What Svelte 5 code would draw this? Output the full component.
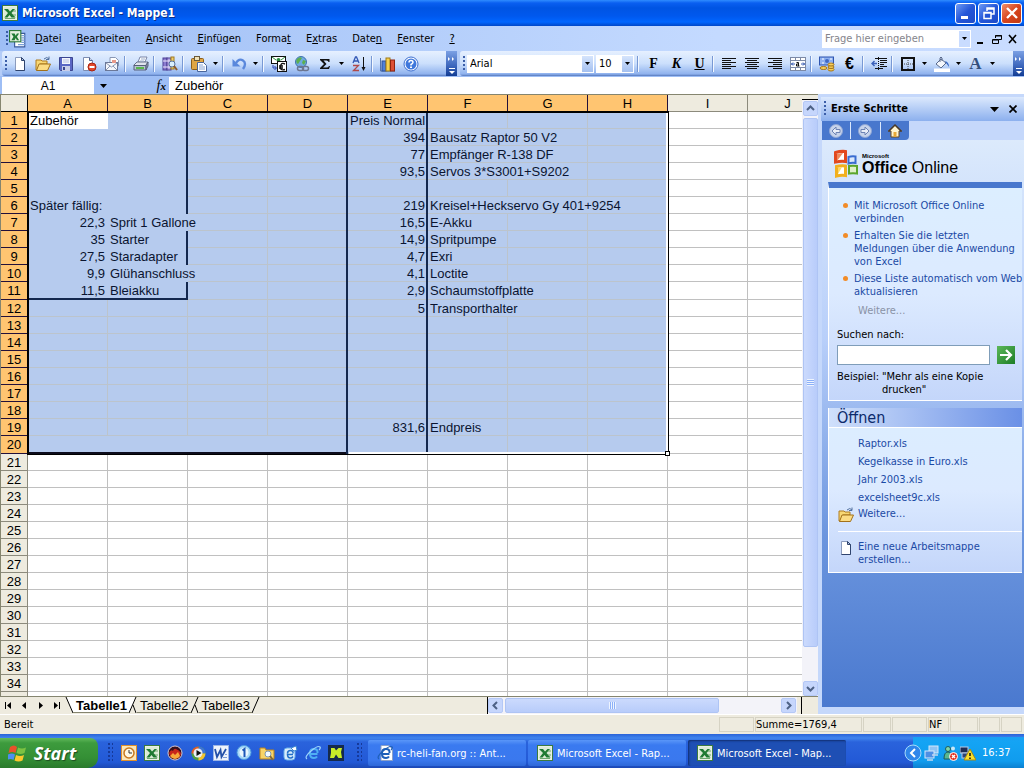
<script>
  const columns = ["A", "B", "C", "D", "E", "F", "G", "H", "I", "J"];
  const rowNumbers = Array.from({ length: 35 }, (_, i) => i + 1);

  // spill: how many cell edges the text runs across
  const cells = {
    A1: { text: "Zubehör" },
    A6: { text: "Später fällig:", spill: 1 },
    A7: { text: "22,3", num: true },
    B7: { text: "Sprit 1 Gallone", spill: 1 },
    A8: { text: "35", num: true },
    B8: { text: "Starter" },
    A9: { text: "27,5", num: true },
    B9: { text: "Staradapter" },
    A10: { text: "9,9", num: true },
    B10: { text: "Glühanschluss", spill: 1 },
    A11: { text: "11,5", num: true },
    B11: { text: "Bleiakku" },
    E1: { text: "Preis Normal" },
    E2: { text: "394", num: true },
    F2: { text: "Bausatz Raptor 50 V2", spill: 1 },
    E3: { text: "77", num: true },
    F3: { text: "Empfänger R-138 DF", spill: 1 },
    E4: { text: "93,5", num: true },
    F4: { text: "Servos 3*S3001+S9202", spill: 1 },
    E6: { text: "219", num: true },
    F6: { text: "Kreisel+Heckservo Gy 401+9254", spill: 2 },
    E7: { text: "16,5", num: true },
    F7: { text: "E-Akku" },
    E8: { text: "14,9", num: true },
    F8: { text: "Spritpumpe" },
    E9: { text: "4,7", num: true },
    F9: { text: "Exri" },
    E10: { text: "4,1", num: true },
    F10: { text: "Loctite" },
    E11: { text: "2,9", num: true },
    F11: { text: "Schaumstoffplatte", spill: 1 },
    E12: { text: "5", num: true },
    F12: { text: "Transporthalter", spill: 1 },
    E19: { text: "831,6", num: true },
    F19: { text: "Endpreis" },
  };

  const isSpilled = (c, r) => {
    for (let back = 0; back < 2; back++) {
      const cell = cells[columns[c - back] + r];
      if (cell?.spill > back) return true;
    }
    return false;
  };

  const cellClass = (c, r) => {
    const name = [];
    const selected = c < 8 && r <= 20;
    if (selected) name.push("sel");
    if (c === 0 && r === 1) name.push("active");
    if (c < 2 && r <= 11) name.push("plain");
    if (isSpilled(c, r)) name.push("open");
    else if (c === 1 && r <= 11) name.push("thick-r");
    if (c < 2 && r === 11) name.push("thick-b");
    if ((c === 3 || c === 4) && r <= 20) name.push("thick-r");
    if (c < 4 && r === 20) name.push("total");
    if (cells[columns[c] + r]?.num) name.push("num");
    return name.join(" ");
  };

  const menus = [
    ["", "D", "atei"],
    ["", "B", "earbeiten"],
    ["", "A", "nsicht"],
    ["", "E", "infügen"],
    ["Forma", "t", ""],
    ["E", "x", "tras"],
    ["Date", "n", ""],
    ["", "F", "enster"],
    ["", "?", ""],
  ];

  const standardTools = [
    ["new", "Neu"],
    ["open", "Öffnen"],
    ["save", "Speichern"],
    ["permission", "Berechtigung"],
    ["mail", "E-Mail"],
    ["|"],
    ["print", "Drucken"],
    ["|"],
    ["research", "Recherchieren"],
    ["|"],
    ["paste", "Einfügen", true],
    ["|"],
    ["undo", "Rückgängig", true],
    ["|"],
    ["convert", "Euroumrechnung"],
    ["link", "Hyperlink"],
    ["sum", "AutoSumme", true],
    ["sort", "Aufsteigend sortieren"],
    ["|"],
    ["chart", "Diagramm-Assistent"],
    ["help", "Hilfe"],
  ];

  const formatTools = [
    ["|"],
    ["bold", "Fett"],
    ["italic", "Kursiv"],
    ["underline", "Unterstrichen"],
    ["|"],
    ["left", "Linksbündig"],
    ["center", "Zentriert"],
    ["right", "Rechtsbündig"],
    ["merge", "Verbinden und zentrieren"],
    ["|"],
    ["currency", "Währung"],
    ["euro", "Euro"],
    ["|"],
    ["outdent", "Einzug verkleinern"],
    ["|"],
    ["border", "Rahmen", true],
    ["fill", "Füllfarbe", true],
    ["color", "Schriftfarbe", true],
  ];

  const news = [
    "Mit Microsoft Office Online verbinden",
    "Erhalten Sie die letzten Meldungen über die Anwendung von Excel",
    "Diese Liste automatisch vom Web aktualisieren",
  ];
  const recent = ["Raptor.xls", "Kegelkasse in Euro.xls", "Jahr 2003.xls", "excelsheet9c.xls"];

  const quickLaunch = ["outlook", "excel", "firebird", "media", "word", "one", "folder", "express", "ie", "icq"];
  const tasks = [
    { icon: "iedoc", label: "rc-heli-fan.org :: Ant..." },
    { icon: "excel", label: "Microsoft Excel - Rap..." },
    { icon: "excel", label: "Microsoft Excel - Map...", active: true },
  ];

  let fontName = $state("Arial");
  let fontSize = $state("10");
  let formula = $state("Zubehör");
  let nameBox = $state("A1");
  let sheet = $state("Tabelle1");
</script>

{#snippet icon(name)}
  <svg class="icon" viewBox="0 0 16 16" width="16" height="16" aria-hidden="true">
    {#if name === "excel"}
      <rect x="0.5" y="0.5" width="15" height="15" fill="#e9f1e4" stroke="#3c7a3e" />
      <rect x="2" y="2" width="12" height="12" fill="#dcebd6" />
      <path d="M2 4h4l2 2.500L10.500 4H13L9.500 8l4 4.500h-4L7.500 10 5.500 12.500H2.500L6 8z" fill="#1f7a33" />
      <path d="M11 6h3M11 10h3M3 13.500h10" stroke="#6aa86e" />
    {:else if name === "book"}
      <path d="M5 3h9v12H5z" fill="#fff" stroke="#3a5a9c" />
      <path d="M11 5h3M11 7h3M11 9h3M11 11h3M8 13h6" stroke="#7aa0d8" />
      <rect x="0.5" y="0.5" width="10" height="10" fill="#e4f0df" stroke="#2f7a3a" />
      <path d="M2 3h3l1 2 1-2h2L7 6l2 3H7L6 7 5 9H2l2-3z" fill="#1f7a33" />
    {:else if name === "new"}
      <path d="M3.5 1.5h6l3 3v10h-9z" fill="#fff" stroke="#8b9bbd" />
      <path d="M12.5 4.500v10h-9" fill="none" stroke="#2f446e" />
      <path d="M9.500 1.500v3h3z" fill="#b8c8e8" stroke="#2f446e" />
    {:else if name === "open"}
      <path d="M1 4h5l1 1h5v3H5l-3 6H1z" fill="#f7d774" stroke="#b07c1e" />
      <path d="M4 8h11.500l-3 6.500H1.500z" fill="#fbdc84" stroke="#a2711a" />
      <path d="M9 3q3-3 5 0M14 0.500V3.500h-3" fill="none" stroke="#52719f" />
    {:else if name === "save"}
      <path d="M1.500 1.500h13v13h-12l-1-1z" fill="#5a66c4" stroke="#3c4691" />
      <rect x="4" y="2" width="8" height="6" fill="#f3f5fc" />
      <path d="M5 4h6M5 6h6" stroke="#b8bfe2" />
      <rect x="4" y="10" width="8" height="5" fill="#c9cee8" />
      <rect x="5" y="11" width="2" height="3" fill="#39448e" />
    {:else if name === "permission"}
      <path d="M2.500 1.500h6l3 3v10h-9z" fill="#fff" stroke="#7c8db2" />
      <path d="M8.500 1.500v3h3" fill="#cdd9ef" stroke="#51658f" />
      <circle cx="11" cy="11" r="4" fill="#e2492c" stroke="#a82310" />
      <rect x="8.500" y="10" width="5" height="2" fill="#fff" />
    {:else if name === "mail"}
      <path d="M6 5V1.500h5.500l3 3V10H6z" fill="#fff" stroke="#8a98b4" />
      <rect x="1.500" y="6.500" width="12" height="8" fill="#f4f6fb" stroke="#6b7898" />
      <path d="M2 7l5.500 4L13 7M2 14l4-4M13 14l-4-4" fill="none" stroke="#8a98b4" />
      <rect x="8" y="4" width="4" height="3" fill="#e89888" />
    {:else if name === "print"}
      <path d="M5 6l2-5h7l-2 5z" fill="#fff" stroke="#7a86a8" />
      <path d="M1 9l3-3h11l-2 4H1z" fill="#dfe4ec" stroke="#68728a" />
      <path d="M1 9.500h12v4.500H1z" fill="#b9c2d2" stroke="#56607a" />
      <path d="M13 9l2-3v4l-2 4z" fill="#8e99ae" stroke="#56607a" />
      <rect x="3" y="11" width="8" height="2" fill="#58b84a" />
      <path d="M8 3h4M7 5h4" stroke="#9fb0cc" />
    {:else if name === "research"}
      <rect x="1" y="2" width="4" height="12" fill="#8c7cd0" stroke="#4c3f94" />
      <rect x="5" y="2" width="4" height="12" fill="#b4a4e4" stroke="#4c3f94" />
      <path d="M1 5h8M1 11h8" stroke="#efeafd" />
      <rect x="9" y="1" width="3" height="12" fill="#f0cf6a" stroke="#a07a22" />
      <circle cx="10" cy="8" r="3" fill="#d9effc" stroke="#55719c" />
      <path d="M12 10l3 4" stroke="#8a5a2c" stroke-width="2" />
    {:else if name === "paste"}
      <rect x="0.500" y="2.500" width="12" height="11" rx="1" fill="#e0a645" stroke="#8c5f1a" />
      <rect x="3.500" y="0.500" width="5" height="4" fill="#f0e2b8" stroke="#6b5a38" />
      <path d="M6.500 6.500h6l3 3v6h-9z" fill="#fff" stroke="#4a669c" />
      <path d="M8 9h4M8 11h6M8 13h6" stroke="#88a4d4" />
    {:else if name === "undo"}
      <path d="M5 7q3-5 7-2.500t0 8.500" fill="none" stroke="#5a88dc" stroke-width="2.400" />
      <path d="M1.500 3v7.500h8z" fill="#5a88dc" />
    {:else if name === "convert"}
      <rect x="0.500" y="0.500" width="14" height="7" fill="#fff" stroke="#111" />
      <path d="M1 1l4 3M14 1l-4 3" stroke="#2a8a3c" />
      <circle cx="7.500" cy="4" r="2" fill="#2a8a3c" />
      <rect x="6.500" y="5.500" width="9" height="10" fill="#fff" stroke="#111" />
      <path d="M14 8q-4-2-4.500 2.500T14 13.500M8 10h4M8 12h4" fill="none" stroke="#111" stroke-width="1.400" />
      <path d="M2 9v3h3M3.500 10l2 2-2 2" fill="none" stroke="#2440b0" />
    {:else if name === "link"}
      <circle cx="7" cy="6" r="5.500" fill="#6fa9e0" stroke="#3f73ac" />
      <path d="M3 3q3-3 5-1l-2 3-2 3q-3-2-1-5M9 4l3 1-2 4-2-2z" fill="#5cb04e" />
      <rect x="3.500" y="10.500" width="6" height="4" rx="2" fill="none" stroke="#6c7690" stroke-width="1.500" />
      <rect x="8.500" y="10.500" width="6" height="4" rx="2" fill="none" stroke="#6c7690" stroke-width="1.500" />
    {:else if name === "sum"}
      <path d="M3 3h9.500v3h-1q0-1.500-2-1.500H6.500L9.500 8l-3.500 3.500h3.500q2 0 2.500-1.500h1l-1 3H3v-1L7 8 3 4z" fill="#111" />
    {:else if name === "sort"}
      <path d="M2 7l2.500-6h1L8 7M3 5h4" fill="none" stroke="#3358b4" stroke-width="1.300" />
      <path d="M2 9.500h5.500L2.500 14.500H8" fill="none" stroke="#b04a4a" stroke-width="1.300" />
      <path d="M12.500 1v12" stroke="#111" />
      <path d="M10.500 11h4l-2 4z" fill="#111" />
    {:else if name === "chart"}
      <path d="M0.500 2v13H15" fill="none" stroke="#5572a8" />
      <rect x="2" y="5" width="4" height="10" fill="#4f80d8" stroke="#2c4f98" />
      <rect x="6" y="2" width="4" height="13" fill="#f7d14e" stroke="#a07a14" />
      <rect x="10.500" y="4" width="4" height="11" fill="#dd5136" stroke="#90250f" />
    {:else if name === "help"}
      <circle cx="8" cy="8" r="7" fill="#fff" stroke="#3c6fd0" />
      <circle cx="8" cy="8" r="5.500" fill="#3f78dc" />
      <path d="M6 6.500q0-2 2-2t2 1.800q0 1-2 2.200v1" fill="none" stroke="#fff" stroke-width="1.500" />
      <rect x="7" y="10.500" width="2" height="1.500" fill="#fff" />
    {:else if name === "left" || name === "center" || name === "right"}
      <path d="M1 2.500h14M1 6.500h14M1 10.500h14" stroke="#111" />
      {#if name === "left"}
        <path d="M1 4.500h9M1 8.500h9M1 12.500h9" stroke="#111" />
      {:else if name === "center"}
        <path d="M3 4.500h10M3 8.500h10M3 12.500h10" stroke="#111" />
      {:else}
        <path d="M6 4.500h9M6 8.500h9M6 12.500h9" stroke="#111" />
      {/if}
    {:else if name === "merge"}
      <rect x="0.500" y="1.500" width="15" height="13" fill="#fff" stroke="#7d8aa6" />
      <path d="M1 4.500h14M1 11.500h14M5.500 2v2M10.500 2v2M5.500 12v2M10.500 12v2" stroke="#7d8aa6" />
      <path d="M1 8h4M3 6.500L1.500 8 3 9.500M15 8h-4M13 6.500L14.500 8 13 9.500" fill="none" stroke="#2f55b0" />
      <path d="M6.500 6.500h2v3.500M8.500 8h-2v2h3" fill="none" stroke="#111" />
    {:else if name === "currency"}
      <rect x="0.500" y="1" width="14" height="8" fill="#8db0f0" stroke="#2f55b0" />
      <circle cx="8" cy="5" r="2" fill="#3f68c4" />
      <path d="M3 3h2M11 3h2M3 7h2M11 7h2" stroke="#fff" />
      <ellipse cx="4.500" cy="12" rx="3.500" ry="1.500" fill="#f7cf58" stroke="#a5751a" />
      <ellipse cx="12" cy="13.500" rx="3" ry="1.500" fill="#f7cf58" stroke="#a5751a" />
      <ellipse cx="12" cy="11" rx="3" ry="1.500" fill="#f7cf58" stroke="#a5751a" />
      <ellipse cx="12" cy="8.500" rx="3" ry="1.500" fill="#f7cf58" stroke="#a5751a" />
    {:else if name === "outdent"}
      <path d="M4 2.500h12M9 4.500h7M9 6.500h7M9 8.500h4M9 10.500h7M4 12.500h8" stroke="#111" />
      <path d="M1 7.500h5M3.500 5L1 7.500 3.500 10" fill="none" stroke="#3b62bc" stroke-width="1.500" />
      <path d="M7.500 1v14" stroke="#111" stroke-dasharray="1 1" />
    {:else if name === "border"}
      <rect x="2" y="2" width="12" height="12" fill="none" stroke="#111" stroke-width="2" />
      <path d="M8 4v9M4 8h9" stroke="#444" stroke-dasharray="1 1" />
    {:else if name === "fill"}
      <path d="M2 8l5-5 5 4-5 5z" fill="#f5f8fd" stroke="#5a6a8c" />
      <path d="M6 6V2q1-2 2 0v3" fill="none" stroke="#5a6a8c" />
      <path d="M11 5q4 1 4 6-2-3-3-4z" fill="#3568c8" />
      <rect x="0" y="12.500" width="16" height="3.500" fill="#fff" />
    {:else if name === "outlook"}
      <rect x="0.500" y="0.500" width="15" height="15" fill="#fbe6b8" stroke="#e0902c" />
      <circle cx="8" cy="8" r="5" fill="#fff8e2" stroke="#c87820" stroke-width="1.500" />
      <path d="M8 5v3h3" fill="none" stroke="#333" />
    {:else if name === "firebird"}
      <circle cx="8" cy="8" r="7" fill="#37101c" stroke="#d8c8d0" />
      <path d="M2 8q2-4 4-2 1-3 3-2 3 1 5 4 0 5-6 6-5-1-6-6" fill="#c8251a" />
      <path d="M3 11l3-3 2 2 3-3 2 4q-2 3-5 3t-5-3" fill="#f8a83a" />
    {:else if name === "media"}
      <circle cx="8.500" cy="8.500" r="7" fill="#4f9c46" />
      <path d="M8.500 8.500V1.500a7 7 0 0 1 7 7z" fill="#3f74d4" />
      <path d="M8.500 8.500h7a7 7 0 0 1-7 7z" fill="#f1c232" />
      <path d="M8.500 8.500h-7a7 7 0 0 1 7-7z" fill="#e25a2b" />
      <circle cx="8" cy="8" r="4.500" fill="#e9eef6" />
      <path d="M6.500 5l5 3-5 3z" fill="#111" />
    {:else if name === "word"}
      <rect x="0.500" y="0.500" width="15" height="15" fill="#eef3fc" stroke="#9cb4e4" />
      <path d="M2 4l2 8L7.500 5l1 7 4.500-8" fill="none" stroke="#2450a8" stroke-width="1.800" />
      <path d="M10 12.500h4M12 9.500h2" stroke="#7d9cd8" />
    {:else if name === "one"}
      <circle cx="8" cy="7.500" r="7" fill="#a8d8f8" stroke="#4f9ce0" />
      <circle cx="8" cy="7.500" r="4.500" fill="#e8f6ff" />
      <path d="M6.500 5.500L8.500 4v8" fill="none" stroke="#1d57b8" stroke-width="2" />
    {:else if name === "folder"}
      <path d="M1 3h5l1 2h8v9H1z" fill="#f8d468" stroke="#b9821c" />
      <circle cx="9" cy="9" r="3" fill="#f2fbff" stroke="#7f97b0" />
      <path d="M11 11l3 4" stroke="#7f6a40" stroke-width="2" />
    {:else if name === "express"}
      <rect x="2" y="3" width="11" height="12" rx="3" fill="#d8ecfb" stroke="#6ab0ea" />
      <path d="M11 9.500H5.500q0 3.500 3 3.500 1.500 0 2.500-1.500M5.500 8.500q0-3 3-3t2.500 3" fill="none" stroke="#2270c8" stroke-width="1.500" />
      <path d="M9 3l5-2 1 4-3 1z" fill="#fff" stroke="#3a86d0" />
    {:else if name === "ie" || name === "iedoc"}
      {#if name === "iedoc"}
        <path d="M4 0.500h8l3.500 3.500v11.500H4z" fill="#fff" stroke="#8aa0c8" />
      {/if}
      <path d="M12.500 9H5q0 4 4 4 2 0 3-1.500M5 8q0-4 4-4t3.500 4" fill="none" stroke={name === "ie" ? "#4fb0f4" : "#1d5fb8"} stroke-width="2" />
      <path d="M2 14q-3-2 4-8T15 2q1 1-1 3" fill="none" stroke={name === "ie" ? "#9cd4fb" : "#1d5fb8"} stroke-width="1.200" />
    {:else if name === "icq"}
      <rect x="0" y="0" width="16" height="16" fill="#152a4c" />
      <path d="M3 3h3.500l1.500 2.500L10.500 3H14l-1 4 1 6h-3.500L8 9.500 6 13H2l1-5z" fill="#c8ec28" />
    {:else if name === "home"}
      <path d="M8 2l6.500 6H12v6H4V8H1.500z" fill="#fff4d0" stroke="#6a4a20" />
      <path d="M1.500 8.500L8 2l6.500 6.500" fill="none" stroke="#4a3a28" stroke-width="1.500" />
      <rect x="6.500" y="9" width="3" height="5" fill="#e8a838" />
    {:else if name === "back" || name === "forward"}
      <circle cx="8" cy="8" r="6.500" fill="#c7d3ea" stroke="#8ea6d6" />
      <path d={name === "back" ? "M4 8l4-4v2.500h4v3H8V12z" : "M12 8L8 4v2.500H4v3h4V12z"} fill="#e9eef8" stroke="#6d83b4" />
    {:else if name === "net"}
      <rect x="5" y="1" width="9" height="7" fill="#8fc4f4" stroke="#d4e8fb" />
      <rect x="1" y="6" width="9" height="7" fill="#4d8fe4" stroke="#d4e8fb" />
      <path d="M3 15h6M8 10h6" stroke="#c4d8f0" stroke-width="1.500" />
    {:else if name === "msn"}
      <circle cx="6" cy="4" r="2.500" fill="#7fd6a8" stroke="#1f5a5a" />
      <path d="M2 14q0-7 4-7t4 7z" fill="#58b890" stroke="#1f5a5a" />
      <circle cx="11" cy="3.500" r="2" fill="#c8e8f8" />
      <circle cx="11.500" cy="11.500" r="4" fill="#e03424" stroke="#fff" />
      <path d="M10 10l3 3M13 10l-3 3" stroke="#fff" stroke-width="1.400" />
    {:else if name === "warn"}
      <rect x="0" y="2" width="8" height="6" fill="#1c2c54" stroke="#b8cbe8" />
      <rect x="2" y="8" width="8" height="5" fill="#2c4478" stroke="#b8cbe8" />
      <path d="M10 4l6 11H4z" fill="#fbe02c" stroke="#a88a10" />
      <path d="M10 8v3M10 12.500v1.500" stroke="#111" stroke-width="1.500" />
    {/if}
  </svg>
{/snippet}

{#snippet arrow()}
  <svg viewBox="0 0 5 3" width="5" height="3" aria-hidden="true"><path d="M0 0h5L2.500 3z" fill="#000" /></svg>
{/snippet}

{#snippet chevron(dir)}
  <svg viewBox="0 0 9 9" width="9" height="9" aria-hidden="true">
    <path
      d={{ up: "M1 6l3.500-3.500L8 6", down: "M1 3l3.500 3.500L8 3", left: "M6 1L2.500 4.500 6 8", right: "M3 1l3.500 3.500L3 8" }[dir]}
      fill="none"
      stroke="#4d6185"
      stroke-width="2"
    />
  </svg>
{/snippet}

{#snippet tool([name, label, hasMenu])}
  {#if name === "|"}
    <span class="sep"></span>
  {:else}
    <button class="tool {name}" aria-label={label}>
      {#if name === "bold"}F{:else if name === "italic"}K{:else if name === "underline"}U{:else if name === "euro"}€{:else if name === "color"}A{:else}{@render icon(name)}{/if}
    </button>
    {#if hasMenu}
      <button class="tool-menu" aria-label="{label} Optionen">{@render arrow()}</button>
    {/if}
  {/if}
{/snippet}

{#snippet endCap()}
  <button class="cap" aria-label="Symbolleistenoptionen">
    <svg viewBox="0 0 8 22" width="8" height="22" aria-hidden="true">
      <path d="M0 4l2 2-2 2zM4 4l2 2-2 2z" fill="#fff" />
      <path d="M1 15.500h6" stroke="#fff" />
      <path d="M1 18h6l-3 3z" fill="#fff" />
    </svg>
  </button>
{/snippet}

<div class="desktop">
  <header class="titlebar">
    {@render icon("excel")}
    <h1>Microsoft Excel - Mappe1</h1>
    <button class="win" aria-label="Minimieren"><svg viewBox="0 0 20 20" width="20" height="20"><path d="M5 14.500h7" stroke="#fff" stroke-width="3" /></svg></button>
    <button class="win" aria-label="Wiederherstellen"><svg viewBox="0 0 20 20" width="20" height="20"><path d="M8 8V5h7v6h-3M8 6h7" fill="none" stroke="#fff" stroke-width="1.500" /><path d="M5 9.500h7v6H5zM5 10h7" fill="none" stroke="#fff" stroke-width="1.500" /></svg></button>
    <button class="win close" aria-label="Schließen"><svg viewBox="0 0 20 20" width="20" height="20"><path d="M5 5l10 10M15 5L5 15" stroke="#fff" stroke-width="2.400" /></svg></button>
  </header>

  <nav class="menubar">
    <span class="grip"></span>
    {@render icon("book")}
    <div class="menus">
      {#each menus as [before, key, after]}
        <button>{before}<u>{key}</u>{after}</button>
      {/each}
    </div>
    <div class="ask">
      <input aria-label="Frage" placeholder="Frage hier eingeben" />
      <span class="ask-arrow">{@render arrow()}</span>
    </div>
    <button class="doc-win" aria-label="Fenster minimieren"><svg viewBox="0 0 12 12" width="12" height="12"><path d="M2 10h6" stroke="#000" stroke-width="2" /></svg></button>
    <button class="doc-win" aria-label="Fenster wiederherstellen"><svg viewBox="0 0 12 12" width="12" height="12"><path d="M4.500 5V2.500h6v4H8M4 3h7M2 7h6" fill="none" stroke="#000" /><path d="M1.500 6.500h6v4h-6z" fill="none" stroke="#000" /></svg></button>
    <button class="doc-win" aria-label="Fenster schließen"><svg viewBox="0 0 12 12" width="12" height="12"><path d="M2 2l7 8M9 2L2 10" stroke="#000" stroke-width="1.600" /></svg></button>
  </nav>

  <div class="toolbars">
    <div class="toolbar standard">
      <span class="grip"></span>
      {#each standardTools as item}
        {@render tool(item)}
      {/each}
      {@render endCap()}
    </div>
    <div class="toolbar format">
      <span class="grip"></span>
      <div class="combo font">
        <select aria-label="Schriftart" bind:value={fontName}><option>Arial</option></select>
        <span>{@render arrow()}</span>
      </div>
      <div class="combo size">
        <select aria-label="Schriftgrad" bind:value={fontSize}><option>10</option></select>
        <span>{@render arrow()}</span>
      </div>
      {#each formatTools as item}
        {@render tool(item)}
      {/each}
      {@render endCap()}
    </div>
  </div>

  <div class="formulabar">
    <input class="name-box" aria-label="Namenfeld" bind:value={nameBox} />
    <button class="name-menu" aria-label="Namen"><svg viewBox="0 0 7 4" width="7" height="4"><path d="M0 0h7L3.500 4z" /></svg></button>
    <button class="fx" aria-label="Funktion einfügen"><i>f</i><small>x</small></button>
    <input class="formula" aria-label="Bearbeitungsleiste" bind:value={formula} />
  </div>

  <div class="workspace">
    <main class="book">
      <div class="sheet-row">
        <div class="sheet">
          <table>
            <colgroup>
              <col class="row-col" />
              {#each columns as col}<col class="data-col" />{/each}
            </colgroup>
            <thead>
              <tr>
                <th class="corner" aria-label="Alles markieren"></th>
                {#each columns as col, c}
                  <th class:hot={c < 8}>{col}</th>
                {/each}
              </tr>
            </thead>
            <tbody>
              {#each rowNumbers as r}
                <tr class:tall={r === 11 || r === 20}>
                  <th class:hot={r <= 20}>{r}</th>
                  {#each columns as col, c}
                    <td class={cellClass(c, r)}>{cells[col + r]?.text ?? ""}</td>
                  {/each}
                </tr>
              {/each}
            </tbody>
          </table>
          <div class="selection"><span class="handle"></span></div>
        </div>
        <div class="scroll vertical">
          <span class="split"></span>
          <button aria-label="Nach oben">{@render chevron("up")}</button>
          <span class="thumb"><i></i></span>
          <span class="track"></span>
          <button aria-label="Nach unten">{@render chevron("down")}</button>
        </div>
      </div>

      <div class="tab-row">
        <div class="tab-nav">
          <button aria-label="Erstes Blatt"><svg viewBox="0 0 9 7" width="9" height="7"><path d="M1.500 0v7" stroke="#000" /><path d="M7 0v7L3 3.500z" /></svg></button>
          <button aria-label="Voriges Blatt"><svg viewBox="0 0 9 7" width="9" height="7"><path d="M6 0v7L2 3.500z" /></svg></button>
          <button aria-label="Nächstes Blatt"><svg viewBox="0 0 9 7" width="9" height="7"><path d="M3 0v7l4-3.500z" /></svg></button>
          <button aria-label="Letztes Blatt"><svg viewBox="0 0 9 7" width="9" height="7"><path d="M7.500 0v7" stroke="#000" /><path d="M2 0v7l4-3.500z" /></svg></button>
        </div>
        <div class="tabs">
          <svg viewBox="0 0 8 16" width="8" height="16"><path d="M1 0h7v16z" fill="#fff" /><path d="M1 0l7 16" stroke="#000" /></svg>
          {#each ["Tabelle1", "Tabelle2", "Tabelle3"] as name, i}
            <button class:current={name === sheet} onclick={() => (sheet = name)}>{name}</button>
            <svg viewBox="0 0 8 16" width="8" height="16">
              {#if name === sheet}<path d="M0 0h7L0 16z" fill="#fff" />{/if}
              <path d="M7 0L0 16" stroke="#000" />
              {#if i < 2}<path d="M4 8l3 8" stroke="#000" />{/if}
            </svg>
          {/each}
        </div>
        <div class="scroll horizontal">
          <span class="split"></span>
          <button aria-label="Nach links">{@render chevron("left")}</button>
          <span class="thumb"><i></i></span>
          <span class="track"></span>
          <button aria-label="Nach rechts">{@render chevron("right")}</button>
          <span class="split end"></span>
        </div>
      </div>
    </main>

    <aside class="pane">
      <div class="pane-title">
        <span class="grip"></span>
        <h2>Erste Schritte</h2>
        <button aria-label="Aufgabenbereiche"><svg viewBox="0 0 9 5" width="9" height="5"><path d="M0 0h9L4.500 5z" /></svg></button>
        <button aria-label="Aufgabenbereich schließen"><svg viewBox="0 0 8 8" width="8" height="8"><path d="M0.500 0.500l7 7M7.500 0.500l-7 7" stroke="#000" stroke-width="1.700" /></svg></button>
      </div>
      <div class="pane-nav">
        <button aria-label="Zurück">{@render icon("back")}</button>
        <button aria-label="Vor">{@render icon("forward")}</button>
        <button aria-label="Startseite">{@render icon("home")}</button>
      </div>
      <div class="pane-body">
        <div class="logo">
          <svg viewBox="0 0 28 30" width="28" height="30" aria-hidden="true">
            <path d="M2.500 3.500q5-1.500 10-1v10q-5-.500-10 .500z" fill="#fff" stroke="#e2481e" stroke-width="3" />
            <path d="M4 12V5l6-1z" fill="#f08a5c" />
            <path d="M15.500 8q3-1 7-.500v6.500q-4-.500-7 .500z" fill="#dbe8fc" stroke="#3a6cd0" stroke-width="2" />
            <path d="M3.500 17.500q4-1 9-.500v9.500q-5-.500-9 .500z" fill="#fff" stroke="#f2b01e" stroke-width="3" />
            <path d="M5 25v-6l4-1z" fill="#fbd768" />
            <path d="M16 17q4-.500 8 0v7.500q-4-.500-8 0z" fill="#dff0c8" stroke="#5ba52c" stroke-width="2" />
          </svg>
          <div class="wordmark"><small>Microsoft</small><span><b>Office</b> Online</span></div>
        </div>
        <section class="card start">
          <ul>
            {#each news as item}
              <li><a href="#news">{item}</a></li>
            {/each}
          </ul>
          <a class="more" href="#more">Weitere...</a>
          <label for="search">Suchen nach:</label>
          <div class="search">
            <input id="search" type="text" />
            <button aria-label="Suchen"><svg viewBox="0 0 18 18" width="18" height="18"><path d="M3 9h10M9 4l5 5-5 5" fill="none" stroke="#fff" stroke-width="2.200" /></svg></button>
          </div>
          <p class="example"><span>Beispiel:</span><span>"Mehr als eine Kopie drucken"</span></p>
        </section>
        <section class="card">
          <h3>Öffnen</h3>
          <div class="files">
            {#each recent as file}
              <a href="#file">{file}</a>
            {/each}
          </div>
          <a class="with-icon" href="#open">{@render icon("open")}<span>Weitere...</span></a>
          <hr />
          <a class="with-icon" href="#new">{@render icon("new")}<span>Eine neue Arbeitsmappe erstellen...</span></a>
        </section>
      </div>
    </aside>
  </div>

  <footer class="status">
    <span class="ready">Bereit</span>
    <span class="box wide"></span>
    <span class="box sum-box">Summe=1769,4</span>
    <span class="box"></span>
    <span class="box wide"></span>
    <span class="box small">NF</span>
    <span class="box"></span>
    <span class="box small"></span>
    <span class="box small"></span>
  </footer>

  <div class="taskbar">
    <button class="start-btn">
      <svg viewBox="0 0 20 18" width="20" height="18" aria-hidden="true">
        <path d="M2 3q4-3 7 0L7.500 9q-3-2-7 0z" fill="#e8512a" />
        <path d="M10 3.500q4 2 8 0L16.500 9q-4 2-8 0z" fill="#7cc242" />
        <path d="M0 10.500q4-2 7 0L5.500 16q-3-2-7 0z" fill="#4d8ff0" />
        <path d="M8 11q4 2 8 0l-1.500 5.500q-4 2-8 0z" fill="#fbc82c" />
      </svg>
      Start
    </button>
    <span class="dots"></span>
    <div class="quick">
      {#each quickLaunch as name}
        <button aria-label={name}>{@render icon(name)}</button>
      {/each}
    </div>
    <span class="dots"></span>
    <div class="tasks">
      {#each tasks as task}
        <button class:active={task.active}>{@render icon(task.icon)}<span>{task.label}</span></button>
      {/each}
    </div>
    <div class="tray">
      <button class="expand" aria-label="Ausgeblendete Symbole"><svg viewBox="0 0 18 18" width="18" height="18"><circle cx="9" cy="9" r="8" fill="#2f86ea" stroke="#a8dcfb" /><path d="M11 5L7 9l4 4" fill="none" stroke="#fff" stroke-width="2" /></svg></button>
      {@render icon("net")}
      {@render icon("msn")}
      {@render icon("warn")}
      <time>16:37</time>
    </div>
  </div>
</div>

<style>
  :global(body) {
    background: #fff;
  }

  .desktop {
    --ui: "DejaVu Sans Condensed", Tahoma, sans-serif;
    --grid: #c0c0c0;
    --beige: #eeebdf;
    --link: #1b4aa5;
    height: 100vh;
    display: flex;
    flex-direction: column;
    overflow: hidden;
    font-family: var(--ui);
    font-size: 11px;
    line-height: 13px;
    color: #000;
  }

  button,
  input,
  select {
    font: inherit;
    color: inherit;
    border: 0;
    padding: 0;
    margin: 0;
    background: none;
    box-sizing: border-box;
    border-radius: 0;
  }

  button {
    display: flex;
    align-items: center;
    justify-content: center;
  }

  h1,
  h2,
  h3,
  p,
  ul {
    margin: 0;
    padding: 0;
  }

  a {
    color: var(--link);
    text-decoration: none;
  }

  svg {
    display: block;
    flex: none;
  }

  .grip {
    width: 3px;
    height: 16px;
    flex: none;
    background: repeating-linear-gradient(#3b5ea8 0 2px, transparent 2px 4px);
    background-size: 2px 100%;
    background-repeat: no-repeat;
  }

  .titlebar {
    height: 26px;
    flex: none;
    display: flex;
    align-items: center;
    gap: 2px;
    padding: 0 2px;
    background: linear-gradient(#2f8cff 0, #0a5ff0 3px, #0054e3 8px, #0058ee 16px, #0066ff 22px, #0047c8 26px);
  }

  .titlebar h1 {
    flex: 1;
    padding-left: 2px;
    color: #fff;
    font: bold 12px/18px var(--ui);
    text-shadow: 1px 1px #0a2f8c;
  }

  .win {
    width: 21px;
    height: 21px;
    border: 1px solid #fff;
    border-radius: 3px;
    background: linear-gradient(135deg, #6f9bf5, #2456d8 50%, #1d4bc8);
  }

  .win.close {
    background: linear-gradient(135deg, #f0906c, #d8451e 50%, #c03a14);
  }

  .menubar {
    height: 25px;
    flex: none;
    display: flex;
    align-items: center;
    padding: 0 3px 0 6px;
    background: linear-gradient(90deg, #9ebef5, #c4daff 70%, #c9dcff);
  }

  .menus {
    flex: 1;
    display: flex;
  }

  .menubar .icon {
    width: 18px;
    height: 18px;
  }

  .menus button {
    height: 20px;
    padding: 0 7px 0 8px;
  }

  .ask {
    display: flex;
    width: 149px;
    height: 18px;
    margin-right: 2px;
    background: #fff;
  }

  .ask input {
    flex: 1;
    min-width: 0;
    padding: 0 3px;
  }

  .ask input::placeholder {
    color: #85858c;
    opacity: 1;
  }

  .ask-arrow {
    width: 11px;
    display: grid;
    place-items: center;
    margin: 1px;
    background: #c9dcff;
  }

  .doc-win {
    width: 16px;
    height: 16px;
  }

  .toolbars {
    height: 25px;
    flex: none;
    display: flex;
    gap: 3px;
    padding-left: 2px;
    background: #b3ccf8;
  }

  .toolbar {
    display: flex;
    align-items: center;
    padding-left: 3px;
    border-radius: 3px 0 0 3px;
    background: linear-gradient(#e6f0ff, #cbdffc 50%, #8fb2ee 92%, #5578bc);
  }

  .standard {
    width: 455px;
    box-sizing: border-box;
  }

  .format {
    flex: 1;
  }

  .tool {
    width: 23px;
    height: 22px;
    flex: none;
  }

  .tool-menu {
    width: 11px;
    height: 22px;
  }

  .sep {
    width: 0;
    height: 16px;
    margin: 0 3px 0 1px;
    flex: none;
    border-left: 1px solid #7899d4;
    border-right: 1px solid #f3f8ff;
  }

  .bold,
  .italic,
  .underline,
  .color {
    font: bold 14px/16px "Liberation Serif", serif;
  }

  .italic {
    font-style: italic;
  }

  .underline {
    text-decoration: underline;
  }

  .color {
    color: #35507c;
    font-size: 17px;
  }

  .euro {
    font: bold 16px/18px "Liberation Sans", sans-serif;
  }

  .cap {
    width: 11px;
    height: 25px;
    margin-left: auto;
    background: linear-gradient(#7ba0e4, #3c66bc 60%, #123c93);
  }

  .combo {
    display: grid;
    height: 18px;
    margin-right: 2px;
    background: #fff;
  }

  .combo.font {
    width: 127px;
    margin-left: 1px;
  }

  .combo.size {
    width: 38px;
  }

  .combo select,
  .combo span {
    grid-area: 1 / 1;
  }

  .combo select {
    appearance: none;
    width: 100%;
    padding: 0 14px 0 3px;
  }

  .combo span {
    justify-self: end;
    width: 11px;
    margin: 1px;
    display: grid;
    place-items: center;
    background: linear-gradient(#d5e4fc, #a4c0f0);
    pointer-events: none;
  }

  .formulabar {
    height: 18px;
    flex: none;
    display: flex;
    padding-left: 2px;
    border-top: 1px solid #9ebef5;
    box-sizing: border-box;
    background: #9ebef5;
    font: 13px/16px "Liberation Sans", sans-serif;
  }

  .name-box {
    width: 92px;
    background: #fff;
    text-align: center;
    font-size: 12px;
  }

  .name-menu {
    width: 19px;
  }

  .fx {
    width: 56px;
    justify-content: flex-end;
    padding-right: 3px;
    font: italic 14px/16px "Liberation Serif", serif;
  }

  .fx small {
    font-size: 11px;
    font-weight: bold;
  }

  .formula {
    flex: 1;
    padding: 0 6px;
    background: #fff;
  }

  .workspace {
    flex: 1;
    min-height: 0;
    display: flex;
    background: #c5d8fb;
  }

  .book {
    flex: 1;
    min-width: 0;
    display: flex;
    flex-direction: column;
    background: var(--beige);
    margin-right: 3px;
  }

  .sheet-row {
    flex: 1;
    min-height: 0;
    display: flex;
    border-top: 1px solid #85856f;
  }

  .sheet {
    flex: 1;
    min-width: 0;
    position: relative;
    overflow: hidden;
    border-left: 1px solid #85856f;
    background: #fff;
  }

  table {
    table-layout: fixed;
    width: 827px;
    border-collapse: separate;
    border-spacing: 0;
    font: 13px/15px "Liberation Sans", sans-serif;
  }

  .row-col {
    width: 27px;
  }

  .data-col {
    width: 80px;
  }

  th {
    height: 17px;
    box-sizing: border-box;
    padding: 0;
    font-weight: normal;
    background: var(--beige);
    border-right: 1px solid #8c8a7c;
    border-bottom: 1px solid #8c8a7c;
  }

  th.corner {
    border-color: #8c8a7c #000 #000 #8c8a7c;
  }

  th.hot {
    background: #ffc571;
    border-color: #22103a;
  }

  /* cell edges are inset shadows, so that thick lines run on unbroken */
  td {
    --right: var(--grid);
    --bottom: var(--grid);
    --right-size: -1px;
    --bottom-size: -1px;
    height: 17px;
    box-sizing: border-box;
    padding: 0 3px 1px 2px;
    box-shadow:
      inset var(--right-size) 0 var(--right),
      inset 0 var(--bottom-size) var(--bottom);
    white-space: nowrap;
    color: #0a1430;
  }

  .tall th,
  .tall td {
    height: 18px;
  }

  td.sel {
    --right: #bcc4cc;
    --bottom: #bcc4cc;
    background: #b6cbee;
  }

  td.num {
    text-align: right;
  }

  td.plain {
    --right: transparent;
    --bottom: transparent;
  }

  td.open {
    --right: transparent;
  }

  td.thick-r {
    --right: #14284e;
    --right-size: -2px;
  }

  td.thick-b {
    --bottom: #14284e;
    --bottom-size: -2px;
  }

  td.active {
    background: #fff;
    color: #000;
  }

  td.total {
    --bottom: #0c0c1c;
    --bottom-size: -2px;
  }

  td.total:not(.thick-r) {
    --right: transparent;
  }

  /* frame round A1:H20 */
  .selection {
    position: absolute;
    left: 26px;
    top: 16px;
    width: 639px;
    height: 341px;
    border: solid #000;
    border-width: 2px 1px 1px 2px;
    box-shadow: inset -2px 0 #fff;
    pointer-events: none;
  }

  .selection::after {
    content: "";
    position: absolute;
    right: 0;
    bottom: 0;
    width: 50%;
    height: 2px;
    background: #fff;
  }

  .handle {
    position: absolute;
    z-index: 1;
    right: -2px;
    bottom: -2px;
    width: 3px;
    height: 3px;
    border: 1px solid #000;
    background: #fff;
  }

  .scroll {
    display: flex;
    background: #f3f3f9;
  }

  .scroll button {
    width: 15px;
    height: 15px;
    flex: none;
    border: 1px solid #b4c8f6;
    border-radius: 2px;
    background: #c6d6fc;
  }

  .scroll .thumb {
    display: grid;
    place-items: center;
    border: 1px solid #aec4f4;
    border-radius: 2px;
    background: #c6d6fc;
    box-sizing: border-box;
  }

  .vertical {
    width: 16px;
    flex-direction: column;
    align-items: center;
  }

  .vertical .split {
    width: 100%;
    height: 5px;
    border-bottom: 1px solid #000;
    background: var(--beige);
    box-sizing: border-box;
    margin-bottom: 1px;
  }

  .vertical .thumb {
    flex: 528;
    width: 15px;
    margin-top: 2px;
    background: linear-gradient(90deg, #cbdafd, #b8ccfa);
  }

  .vertical .track {
    flex: 34;
  }

  .vertical .thumb i {
    width: 7px;
    height: 7px;
    background: repeating-linear-gradient(#eef4fe 0 1px, #8cb0f8 1px 2px);
  }

  .horizontal .thumb i {
    width: 7px;
    height: 7px;
    background: repeating-linear-gradient(90deg, #eef4fe 0 1px, #8cb0f8 1px 2px);
  }

  .tab-row {
    flex: none;
    height: 18px;
    display: flex;
    border-top: 1px solid #85856f;
    box-sizing: border-box;
    padding-right: 16px;
  }

  .tab-nav {
    display: flex;
    width: 65px;
    flex: none;
  }

  .tab-nav button {
    flex: 1;
    height: 16px;
  }

  .tabs {
    flex: 1;
    display: flex;
    height: 16px;
  }

  .tabs button {
    height: 16px;
    padding: 1px 2px 0 3px;
    border-bottom: 1px solid #85856f;
    font: 13px/15px "Liberation Sans", sans-serif;
  }

  .tabs button.current {
    background: #fff;
    font-weight: bold;
  }

  .horizontal {
    flex: none;
    width: 316px;
    align-items: center;
  }

  .horizontal .split {
    width: 1px;
    align-self: stretch;
    border-right: 1px solid #000;
    background: var(--beige);
    flex: none;
  }

  .horizontal .end {
    width: 4px;
    margin-left: 1px;
  }

  .horizontal .thumb {
    flex: 213;
    height: 15px;
    margin-left: 2px;
    background: linear-gradient(#cbdafd, #b8ccfa);
  }

  .horizontal .track {
    flex: 62;
  }

  .pane {
    width: 203px;
    flex: none;
    display: flex;
    flex-direction: column;
    margin: 3px 0 7px;
  }

  .pane-title {
    display: flex;
    align-items: center;
    height: 24px;
    padding: 0 7px 0 3px;
    gap: 10px;
    background: linear-gradient(#dce9fd, #8cb0ee);
  }

  .pane-title h2 {
    flex: 1;
    margin-left: -6px;
    font: bold 11px/14px var(--ui);
  }

  .pane-nav {
    display: flex;
    align-self: flex-start;
    width: 87px;
    height: 19px;
    margin-left: 1px;
    background: #4877cd;
    border-radius: 0 0 4px 0;
  }

  .pane-nav button {
    flex: 1;
    height: 17px;
    margin-top: 1px;
  }

  .pane-nav button + button {
    border-left: 1px solid #dbe8fc;
  }

  .pane-body {
    flex: 1;
    padding: 6px 2px 0 6px;
    margin-left: 1px;
    background: linear-gradient(#dceafc, #b8cffa 35%, #6b95de 70%, #4a79cf);
    display: flex;
    flex-direction: column;
    gap: 7px;
  }

  .logo {
    display: flex;
    height: 36px;
    align-items: center;
    gap: 1px;
    padding-left: 5px;
    margin-bottom: -7px;
  }

  .wordmark {
    display: grid;
    font: 16px/16px "Liberation Sans", sans-serif;
  }

  .wordmark small {
    font: bold 6px/7px "Liberation Sans", sans-serif;
  }

  .card {
    border: 1px solid #fff;
    border-width: 0 0 1px 1px;
    background: linear-gradient(#dceeff, #dceaff 50%, #c4d6fa);
    padding-bottom: 6px;
  }

  .card.start {
    border-top: 6px solid #4877cd;
    padding: 11px 0 4px 8px;
  }

  .card ul {
    list-style: none;
    margin-right: -2px;
  }

  .card li {
    position: relative;
    padding-left: 17px;
    margin-bottom: 4px;
  }

  .card li::before {
    content: "";
    position: absolute;
    left: 6px;
    top: 4px;
    width: 5px;
    height: 5px;
    border-radius: 50%;
    background: #f28c28;
  }

  .more {
    display: block;
    padding: 2px 0 11px 21px;
    color: #8a93a6;
  }

  .search {
    display: flex;
    gap: 7px;
    margin: 4px 0 5px;
    align-items: center;
  }

  .search input {
    width: 153px;
    height: 20px;
    padding: 0 3px;
    border: 1px solid #7f9db9;
    background: #fff;
  }

  .search button {
    width: 18px;
    height: 18px;
    background: linear-gradient(135deg, #5cb85a, #1d7d26);
  }

  .example {
    display: flex;
    gap: 3px;
  }

  h3 {
    height: 19px;
    padding-left: 8px;
    font: 16px/20px var(--ui);
    color: #0c2a6c;
    border-bottom: 1px solid #fff;
    background: linear-gradient(90deg, #d0e0fb, #6a90e6);
  }

  .files {
    display: grid;
    padding: 7px 0 0 29px;
    line-height: 18px;
  }

  .with-icon {
    display: flex;
    gap: 4px;
    padding-left: 9px;
  }

  .card hr {
    margin: 8px 0 8px 9px;
    border: 0;
    border-top: 1px solid #fff;
  }

  .status {
    flex: none;
    height: 20px;
    display: flex;
    align-items: center;
    gap: 1px;
    padding: 0 2px 0 4px;
    box-sizing: border-box;
    border-top: 1px solid #fff;
    background: var(--beige);
  }

  .ready {
    flex: 1;
  }

  .box {
    width: 28px;
    height: 15px;
    box-sizing: border-box;
    border: 1px solid #d6d3c4;
    line-height: 14px;
    white-space: nowrap;
  }

  .box.wide {
    width: 35px;
  }

  .box.small {
    width: 21px;
  }

  .box.sum-box {
    width: 107px;
  }

  .taskbar {
    flex: none;
    height: 34px;
    display: flex;
    align-items: flex-end;
    background: linear-gradient(#2a62d8, #4084ee 4px, #2a63dc 8px, #2259d6 28px, #1c48b4);
    color: #fff;
  }

  .start-btn {
    width: 98px;
    height: 30px;
    gap: 6px;
    padding-right: 14px;
    border-radius: 0 8px 10px 0;
    background: linear-gradient(#62b95c, #3d9b3d 5px, #348f35 20px, #2a7a2c);
    font: italic bold 18px/22px "Open Sans", sans-serif;
    text-shadow: 1px 1px 1px #1d4d20;
  }

  .dots {
    width: 6px;
    height: 20px;
    align-self: center;
    background: radial-gradient(circle, #16399a 1px, transparent 1px) 0 0 / 4px 4px;
    margin: 2px 4px 0 9px;
  }

  .quick {
    display: flex;
    height: 30px;
  }

  .quick button {
    width: 23px;
  }

  .quick + .dots {
    margin-right: 6px;
  }

  .tasks {
    flex: 1;
    display: flex;
    gap: 2px;
    height: 27px;
    padding-bottom: 1px;
    min-width: 0;
  }

  .tasks button {
    width: 158px;
    height: 26px;
    gap: 4px;
    padding-left: 9px;
    justify-content: flex-start;
    border-radius: 2px;
    background: linear-gradient(#5a96f8, #3a7af0 5px, #3a78ee 20px, #2e68d8);
    white-space: nowrap;
  }

  .tasks button.active {
    background: #1e4fb4;
    box-shadow: inset 1px 1px 2px #122f70;
  }

  .tray {
    display: flex;
    align-items: center;
    gap: 2px;
    width: 111px;
    height: 31px;
    background: linear-gradient(#1aa0f2, #14a4f4 5px, #109cee 24px, #0c80d0);
  }

  .expand {
    margin-left: -9px;
  }

  .tray time {
    margin-left: 4px;
  }
</style>
